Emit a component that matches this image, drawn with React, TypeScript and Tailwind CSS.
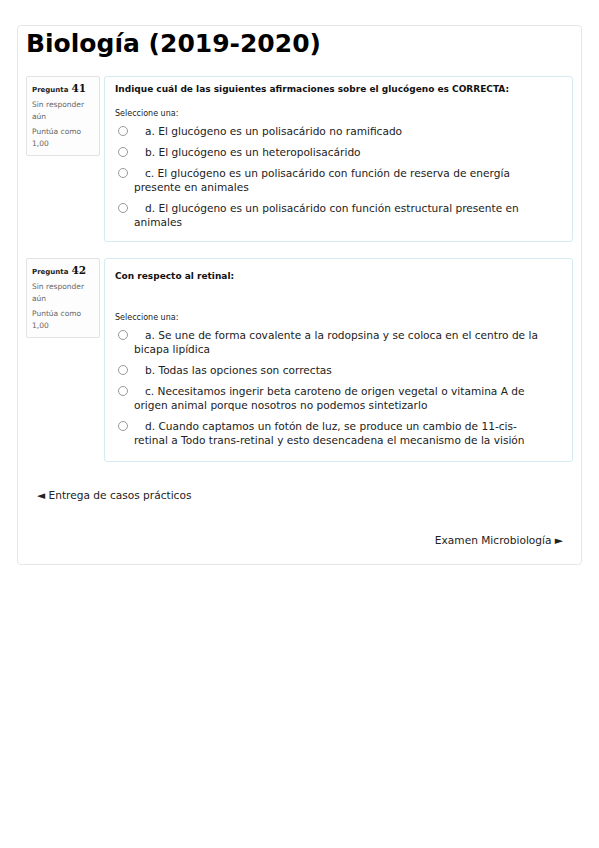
import React from "react"

interface Question {
  num: number
  text: string
  extraGap?: boolean
  options: string[]
}

const questions: Question[] = [
  {
    num: 41,
    text: "Indique cuál de las siguientes afirmaciones sobre el glucógeno es CORRECTA:",
    options: [
      "a. El glucógeno es un polisacárido no ramificado",
      "b. El glucógeno es un heteropolisacárido",
      "c. El glucógeno es un polisacárido con función de reserva de energía presente en animales",
      "d. El glucógeno es un polisacárido con función estructural presente en animales",
    ],
  },
  {
    num: 42,
    text: "Con respecto al retinal:",
    extraGap: true,
    options: [
      "a. Se une de forma covalente a la rodopsina y se coloca en el centro de la bicapa lipídica",
      "b. Todas las opciones son correctas",
      "c. Necesitamos ingerir beta caroteno de origen vegetal o vitamina A de origen animal porque nosotros no podemos sintetizarlo",
      "d. Cuando captamos un fotón de luz, se produce un cambio de 11-cis-retinal a Todo trans-retinal y esto desencadena el mecanismo de la visión",
    ],
  },
]

function QuestionBlock({ q }: { q: Question }) {
  return (
    <div className="flex items-start gap-[4px]">
      {/* Info box */}
      <div className="w-[74px] shrink-0 rounded-[2px] border border-[#e3e3e3] bg-[#fdfdfd] px-[5px] pt-[4px] pb-[5px]">
        <div className="flex items-baseline gap-[3px]">
          <span className="text-[7px] font-bold text-[#222]">Pregunta</span>
          <span className="text-[10.5px] font-bold text-[#111]" style={{ fontFamily: "'DejaVu Serif', serif" }}>
            {q.num}
          </span>
        </div>
        <div className="mt-[2px] text-[7.5px] leading-[12px] text-[#666]">Sin responder aún</div>
        <div className="mt-[3px] text-[7.5px] leading-[12px] text-[#666]">Puntúa como 1,00</div>
      </div>

      {/* Content box */}
      <div
        className={`flex-1 rounded-[3px] border border-[#d4ebf2] bg-white pl-[10px] pr-[10px] ${
          q.extraGap ? "pt-[10px] pb-[14px]" : "pt-[5px] pb-[12px]"
        }`}
      >
        <div className="text-[9px] font-bold leading-[14px] text-[#111]">{q.text}</div>
        <div className={`${q.extraGap ? "mt-[28px]" : "mt-[11px]"} text-[8px] leading-[14px] text-[#222]`}>
          Seleccione una:
        </div>
        <div className="mt-[3px] flex flex-col gap-[7px]">
          {q.options.map((o) => (
            <div key={o} className="pl-[19px] pr-[20px] -indent-[16px] text-[10.6px] leading-[14px] text-[#222]">
              <span className="mr-[17px] inline-block h-[10px] w-[10px] rounded-full border border-[#999] bg-white align-[-1px]" />
              {o}
            </div>
          ))}
        </div>
      </div>
    </div>
  )
}

export default function App() {
  return (
    <div className="min-h-[848px] bg-white pt-[25px]" style={{ fontFamily: "'DejaVu Sans', sans-serif" }}>
      <div className="mx-[17px] rounded-[4px] border border-[#e6e6e6] px-[8px] pb-[17px]">
        <h1 className="pt-[3px] text-[25px] font-bold leading-[30px] text-black">Biología (2019-2020)</h1>

        <div className="mt-[17px] flex flex-col gap-[16px]">
          {questions.map((q) => (
            <QuestionBlock key={q.num} q={q} />
          ))}
        </div>

        <div className="mt-[26px] pl-[11px] text-[10.6px] leading-[14px] text-[#222]">◄ Entrega de casos prácticos</div>
        <div className="mt-[31px] pr-[10px] text-right text-[10.6px] leading-[14px] text-[#222]">Examen Microbiología ►</div>
      </div>
    </div>
  )
}
